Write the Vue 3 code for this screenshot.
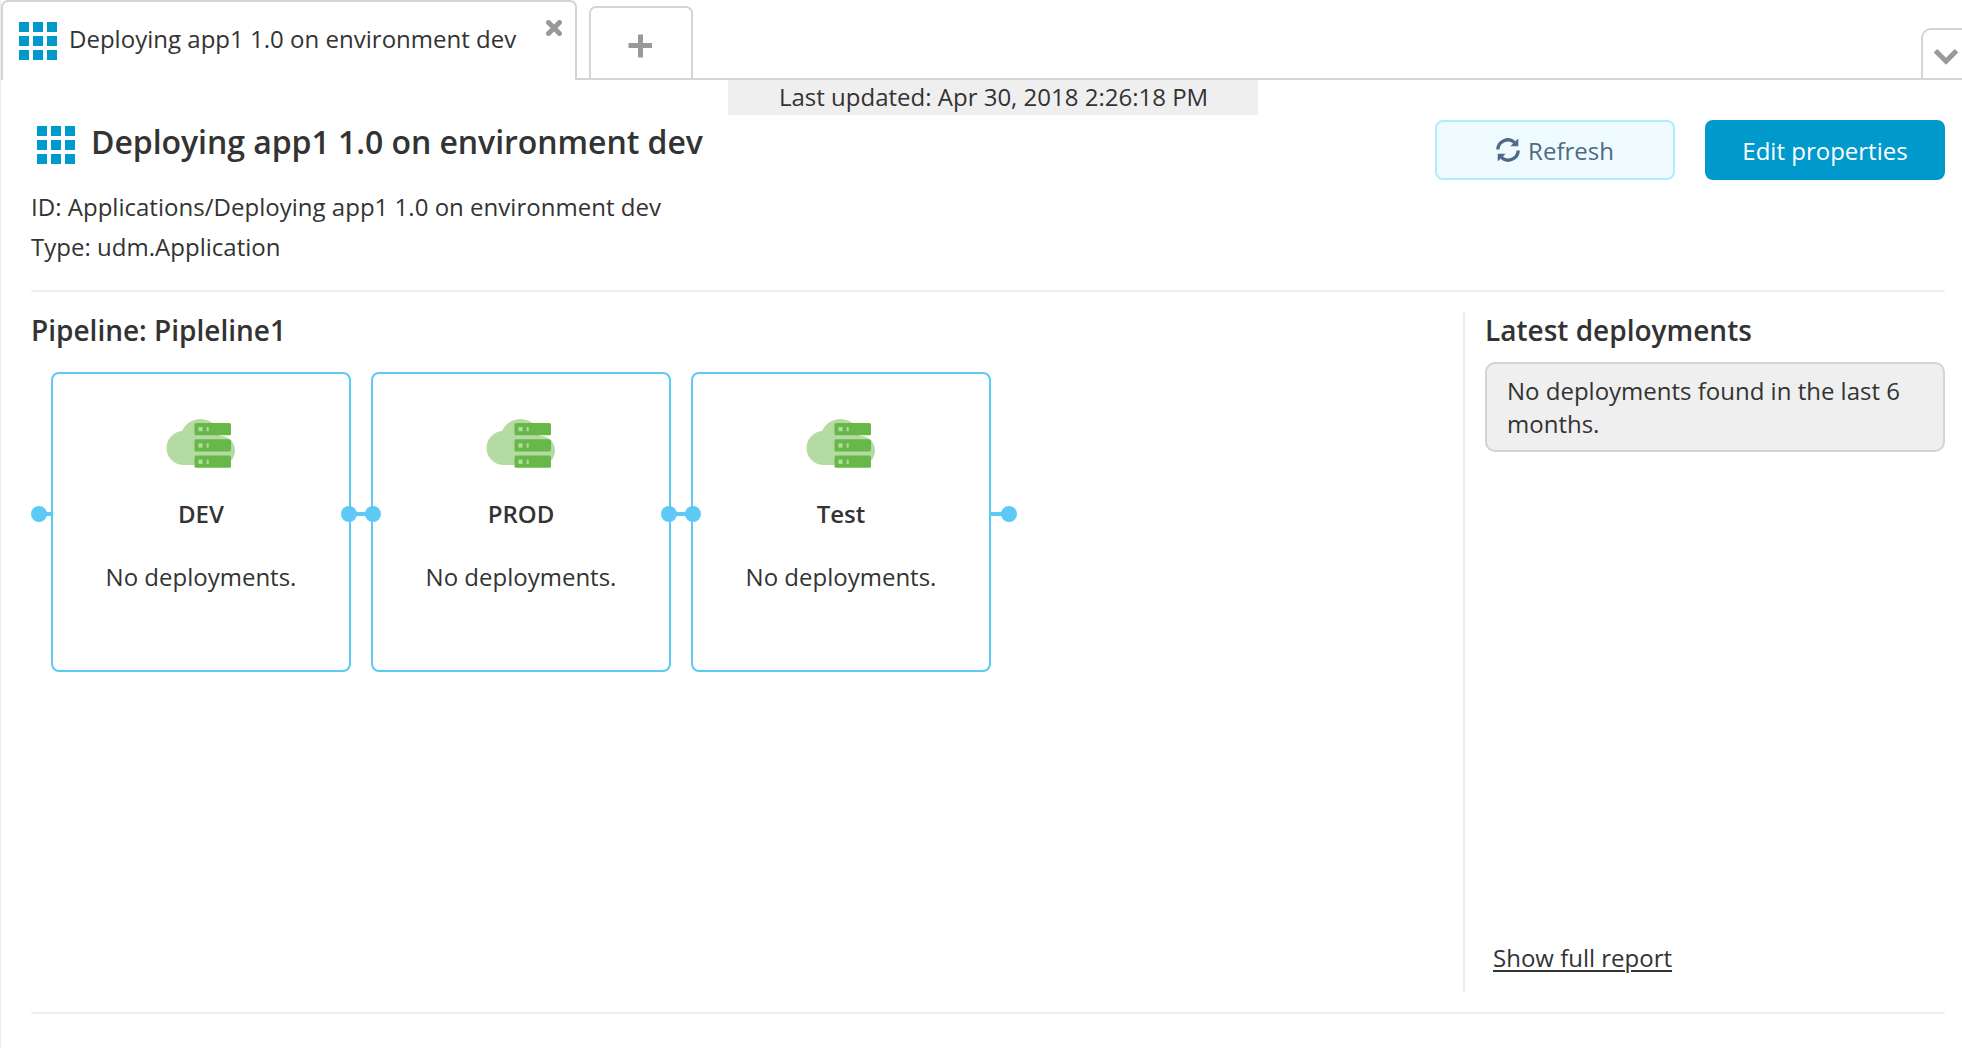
<script setup>
const title = 'Deploying app1 1.0 on environment dev'
const stages = ['DEV', 'PROD', 'Test']
const cells = [0, 14, 28]
</script>

<template>
  <div class="app">
    <header class="tabs">
      <div class="tab active">
        <svg class="grid" width="38" height="38" viewBox="0 0 38 38">
          <template v-for="y in cells" :key="y">
            <rect v-for="x in cells" :key="x" :x="x" :y="y" width="10" height="10" />
          </template>
        </svg>
        <span class="tab-label">{{ title }}</span>
        <svg class="close" width="16" height="16" viewBox="0 0 16 16">
          <path d="M2.500 2.500L13.500 13.500M13.500 2.500L2.500 13.500" stroke-linecap="round" />
        </svg>
      </div>
      <div class="gap small"></div>
      <div class="tab add">
        <svg width="24" height="24" viewBox="0 0 24 24"><path d="M12.500 0.500V23.500M0.500 11.500H24" /></svg>
      </div>
      <div class="gap"></div>
      <div class="tab more">
        <svg width="26" height="18" viewBox="0 0 26 18"><path d="M2.500 2.700L13 13.200L23.500 2.700" /></svg>
      </div>
    </header>

    <main class="page">
      <div class="updated"><span>Last updated: Apr 30, 2018 2:26:18 PM</span></div>

      <section class="head">
        <div class="info">
          <h1>
            <svg class="grid" width="38" height="38" viewBox="0 0 38 38">
              <template v-for="y in cells" :key="y">
                <rect v-for="x in cells" :key="x" :x="x" :y="y" width="10" height="10" />
              </template>
            </svg>
            <span class="h1-text">{{ title }}</span>
          </h1>
          <p>ID: Applications/{{ title }}</p>
          <p>Type: udm.Application</p>
        </div>
        <div class="actions">
          <button class="btn refresh">
            <svg width="24" height="24" viewBox="0 0 24 24">
              <path class="arc" d="M1.800 11.500A10 10 0 0 1 18.500 4.500M22.200 12.500A10 10 0 0 1 5.500 19.500" />
              <path d="M22.300 0.500V8.300H14.300ZM1.700 23.500V15.700H9.700Z" />
            </svg>
            <span>Refresh</span>
          </button>
          <button class="btn primary"><span>Edit properties</span></button>
        </div>
      </section>

      <section class="body">
        <div class="pipeline">
          <h2>Pipeline: Pipleline1</h2>
          <div class="stages">
            <div class="end first"></div>
            <template v-for="(s, i) in stages" :key="s">
              <div v-if="i" class="link"></div>
              <div class="stage">
                <svg width="70" height="50" viewBox="0 0 70 50">
                  <g fill="#b4dba4">
                    <circle cx="17.500" cy="29" r="17" />
                    <circle cx="34.500" cy="20" r="20" />
                    <circle cx="54.500" cy="31.500" r="14.500" />
                    <rect x="17" y="22" width="37" height="24" />
                  </g>
                  <g v-for="n in 3" :key="n" :transform="`translate(28.500 ${4 + (n - 1) * 16.3})`">
                    <rect width="36.500" height="12.200" rx="1.500" fill="#68b749" />
                    <rect x="4" y="4" width="4" height="4.300" fill="#b4dba4" />
                    <rect x="12.200" y="4" width="2" height="4.300" fill="#b4dba4" />
                  </g>
                </svg>
                <h3>{{ s }}</h3>
                <p>No deployments.</p>
              </div>
            </template>
            <div class="end last"></div>
          </div>
        </div>
        <aside class="latest">
          <h2>Latest deployments</h2>
          <div class="note">No deployments found in the last 6 months.</div>
          <a class="report">Show full report</a>
        </aside>
      </section>
    </main>
  </div>
</template>

<style>
body { background: #fff; overflow: hidden; }
</style>

<style scoped>
* { box-sizing: border-box; margin: 0; }
.app {
  width: 1962px; height: 1048px; display: flex; flex-direction: column;
  border-left: 1px solid #eee; overflow: hidden;
  font: 24px/33px "Open Sans", "Noto Sans", sans-serif; color: #333;
}
svg { display: block; flex: none; }
.grid { fill: #0099cc; }
.tabs { height: 80px; display: flex; align-items: flex-end; }
.tab { border: 2px solid #d4d4d4; border-radius: 7px 7px 0 0; }
.active {
  width: 576px; height: 80px; border-bottom: 0; display: flex;
  align-items: flex-start; padding: 20px 13px 0 16px;
}
.tab-label { margin: 0 0 0 12px; flex: 1; white-space: nowrap; letter-spacing: 0.015px; }
.close { margin-top: -2px; }
.close path, .add path, .more path { stroke: #999; fill: none; stroke-width: 5; }
.gap { flex: 1; height: 2px; background: #d4d4d4; }
.gap.small { flex: 0 0 12px; }
.add { width: 104px; height: 74px; padding: 26px 0 0 37px; }
.more { width: 41px; height: 52px; border-right: 0; border-radius: 10px 0 0 0; padding: 18px 0 0 10px; }

.page { flex: 1; padding: 0 17px 0 30px; }
.updated { height: 35px; width: 530px; margin-left: 697px; background: #efefef; padding-left: 51px; line-height: 33px; white-space: nowrap; }
.head { height: 177px; border-bottom: 2px solid #eee; display: flex; justify-content: space-between; }
h1 { display: flex; align-items: center; height: 38px; margin: 11px 0 25px 6px; font-size: 32px; font-weight: 600; line-height: 38px; white-space: nowrap; letter-spacing: -0.05px; }
h1 .grid { margin-right: 16px; }
.h1-text { position: relative; top: -3px; }
.info p { line-height: 40px; height: 40px; white-space: nowrap; position: relative; top: -2px; letter-spacing: 0.02px; }
.actions { display: flex; gap: 30px; padding-top: 5px; }
.btn { width: 240px; height: 60px; border-radius: 8px; border: 0; font: inherit; display: flex; align-items: center; justify-content: center; padding: 1px 0 0; white-space: nowrap; }
.refresh { background: #f0fbff; border: 2px solid #b0ebff; color: #4d6a86; gap: 8px; }
.refresh svg { fill: #4d6a86; margin-top: -2px; }
.refresh .arc { fill: none; stroke: #4d6a86; stroke-width: 3.4; }
.primary { background: #09c; color: #fff; }

.body { height: 722px; border-bottom: 2px solid #eee; padding: 20px 0; display: flex; justify-content: space-between; }
h2 { font-size: 28px; font-weight: 600; line-height: 36px; height: 38px; white-space: nowrap; }
.stages { display: flex; align-items: center; margin-top: 22px; height: 300px; }
.stage { width: 300px; height: 300px; border: 2px solid #5fc9f5; border-radius: 8px; display: flex; flex-direction: column; align-items: center; padding-top: 45px; }
h3 { font-size: 24px; font-weight: 600; line-height: 34px; margin-top: 28px; }
.stage p { margin-top: 29px; white-space: nowrap; }
.link, .end { height: 4px; width: 20px; background: #5fc9f5; position: relative; top: -8px; }
.end { width: 12px; margin-left: 8px; }
.end.last { margin-left: 0; }
.link::before, .link::after, .end::before { content: ""; position: absolute; top: -6px; width: 16px; height: 16px; border-radius: 50%; background: #5fc9f5; }
.link::before { left: -10px; }
.link::after { right: -10px; }
.first::before { left: -8px; }
.last::before { left: 10px; }
.latest { width: 482px; border-left: 2px solid #eee; padding-left: 20px; display: flex; flex-direction: column; align-items: flex-start; }
.note { width: 460px; height: 90px; margin-top: 12px; border: 2px solid #d4d4d4; border-radius: 10px; background: #efefef; padding: 10px 20px; }
.report { margin: auto 0 18px 8px; text-decoration: underline; text-decoration-thickness: 2px; text-underline-offset: 3px; }
</style>
